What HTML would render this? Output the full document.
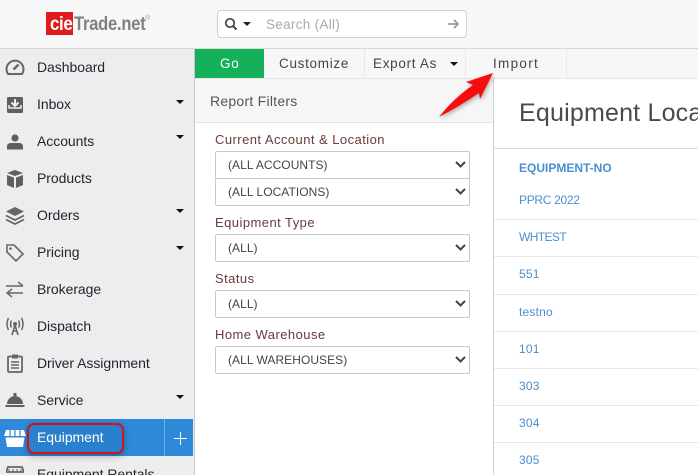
<!DOCTYPE html>
<html><head><meta charset="utf-8"><style>
html,body{margin:0;padding:0;width:698px;height:475px;overflow:hidden;background:#fff;font-family:"Liberation Sans",sans-serif}
.a{position:absolute;white-space:nowrap}
#root{position:relative;width:698px;height:475px;overflow:hidden}
.nav{left:37px;font-size:14px;color:#1f2430;letter-spacing:-.05px;line-height:18px}
.car{position:absolute;left:176px;width:0;height:0;border-left:4px solid transparent;border-right:4px solid transparent;border-top:4px solid #111}
.lab{left:215px;font-size:13px;color:#6b3a3a;letter-spacing:.45px;line-height:16px}
.sel{position:absolute;left:215px;width:253px;height:26px;border:1px solid #c8c8c8;background:#fff;border-radius:2px}
.sel span{position:absolute;left:12px;top:5px;font-size:12px;line-height:16px;color:#444;letter-spacing:.05px}
.sel svg{position:absolute;right:3px;top:9px}
.tb{font-size:13.5px;color:#444;letter-spacing:.7px;line-height:16px;top:56px}
.r{left:519px;font-size:12px;color:#4a8fd0;letter-spacing:.2px;line-height:16px}
.hl{position:absolute;left:494px;width:204px;height:1px;background:#e8e8e8}
svg.i{position:absolute}
</style></head><body><div id="root">
<div class="a" style="left:0;top:0;width:698px;height:48px;background:#f7f7f7;border-bottom:1px solid #d8d8d8"></div>
<div class="a" style="left:46px;top:12px;width:27px;height:23px;background:#e01b1b"></div>
<div class="a" style="left:50px;top:13px;font:bold 17px/22px 'Liberation Sans',sans-serif;color:#fff;letter-spacing:-.4px;transform:scaleY(1.15);transform-origin:0 50%">cie</div>
<div class="a" style="left:74px;top:13px;font:bold 16.5px/22px 'Liberation Sans',sans-serif;color:#808080;letter-spacing:-.2px;transform:scaleY(1.2);transform-origin:0 50%">Trade.net</div>
<div class="a" style="left:145px;top:15px;font:7px/8px 'Liberation Sans',sans-serif;color:#999">®</div>
<div class="a" style="left:217px;top:10px;width:248px;height:26px;border:1px solid #cfcfcf;border-radius:4px;background:#fff"></div>
<svg class="i" style="left:224px;top:17px" width="14" height="14" viewBox="0 0 14 14"><circle cx="6" cy="6" r="4.200" fill="none" stroke="#444" stroke-width="1.700"/><path d="M9 9l3.500 3.500" stroke="#444" stroke-width="2"/></svg>
<div class="a" style="left:243px;top:22px;width:0;height:0;border-left:4px solid transparent;border-right:4px solid transparent;border-top:4px solid #222"></div>
<div class="a" style="left:266px;top:16px;font-size:13.500px;line-height:17px;color:#aaa;letter-spacing:.3px">Search (All)</div>
<svg class="i" style="left:447px;top:18px" width="13" height="12" viewBox="0 0 13 12"><path d="M1 6h10M7 2l4 4-4 4" fill="none" stroke="#909aa4" stroke-width="1.800"/></svg>

<div class="a" style="left:0;top:49px;width:194px;height:426px;background:#ededed;border-right:1px solid #c9c9c9"></div>
<div class="a nav" style="top:58px">Dashboard</div>
<div class="a nav" style="top:95px">Inbox</div><div class="car" style="top:100px"></div>
<div class="a nav" style="top:132px">Accounts</div><div class="car" style="top:135px"></div>
<div class="a nav" style="top:169px">Products</div>
<div class="a nav" style="top:206px">Orders</div><div class="car" style="top:209px"></div>
<div class="a nav" style="top:243px">Pricing</div><div class="car" style="top:246px"></div>
<div class="a nav" style="top:280px">Brokerage</div>
<div class="a nav" style="top:317px">Dispatch</div>
<div class="a nav" style="top:354px">Driver Assignment</div>
<div class="a nav" style="top:391px">Service</div><div class="car" style="top:395px"></div>
<div class="a" style="left:0;top:419px;width:193px;height:37px;background:#2e8ad8"></div>
<div class="a" style="left:164px;top:419px;width:1px;height:37px;background:#6fb0e6"></div>
<div class="a" style="left:27px;top:423px;width:93px;height:27px;border:2px solid #d5101c;border-radius:7px;box-shadow:0 2px 7px rgba(0,0,0,.3);background:#2a80cc"></div>
<div class="a nav" style="top:428px;color:#fff">Equipment</div>
<div class="a" style="left:174px;top:438px;width:13px;height:1px;background:#fff"></div>
<div class="a" style="left:180px;top:432px;width:1px;height:13px;background:#fff"></div>
<div class="a nav" style="top:465px">Equipment Rentals</div>

<svg class="i" style="left:5px;top:58px" width="20" height="18" viewBox="0 0 20 18"><path d="M3 16a8.500 8.500 0 1 1 14 0z" fill="none" stroke="#666" stroke-width="2"/><path d="M8.500 11.500l5-5" stroke="#666" stroke-width="2.400"/></svg>
<svg class="i" style="left:6px;top:96px" width="18" height="18" viewBox="0 0 18 18"><rect x="1" y="1" width="16" height="16" rx="1.500" fill="#5f5f5f"/><path d="M9 3v6M5.500 6.500L9 10l3.500-3.500" stroke="#eee" stroke-width="2" fill="none"/><path d="M3 9v3h12V9" stroke="#eee" stroke-width="1.500" fill="none"/></svg>
<svg class="i" style="left:7px;top:134px" width="16" height="16" viewBox="0 0 16 16"><circle cx="8" cy="4" r="3.600" fill="#5f5f5f"/><path d="M0 15.500v-3q0-3.500 4-3.500h8q4 0 4 3.500v3z" fill="#5f5f5f"/></svg>
<svg class="i" style="left:6px;top:170px" width="18" height="18" viewBox="0 0 18 18"><path d="M9 0l8 3-8 3-8-3zM1 5l7 2.600V18l-7-3zM17 5l-7 2.600V18l7-3z" fill="#5f5f5f"/></svg>
<svg class="i" style="left:5px;top:206px" width="20" height="19" viewBox="0 0 20 19"><path d="M10 1l9 4.500-9 4.500-9-4.500z" fill="#666"/><path d="M1 9.500l9 4.500 9-4.500M1 13.500l9 4.500 9-4.500" stroke="#666" stroke-width="1.800" fill="none"/></svg>
<svg class="i" style="left:5px;top:243px" width="20" height="20" viewBox="0 0 20 20"><path d="M2 2h7l9 9-7 7-9-9z" fill="none" stroke="#666" stroke-width="1.600"/><circle cx="5.500" cy="5.500" r="1.300" fill="#666"/></svg>
<svg class="i" style="left:6px;top:281px" width="18" height="17" viewBox="0 0 18 17"><path d="M0 5h17M12 1l5 4M17 12H1M6 8l-5 4 5 4" fill="none" stroke="#666" stroke-width="1.500"/></svg>
<svg class="i" style="left:5px;top:317px" width="20" height="19" viewBox="0 0 20 19"><circle cx="10" cy="7" r="2" fill="#666"/><path d="M10 8l-3 10M10 8l3 10M7.500 14h5" stroke="#666" stroke-width="1.600"/><path d="M6.500 3.500q-2 3.500 0 7M13.500 3.500q2 3.500 0 7M3.500 1q-3 6 0 12M16.500 1q3 6 0 12" fill="none" stroke="#666" stroke-width="1.500"/></svg>
<svg class="i" style="left:7px;top:354px" width="16" height="19" viewBox="0 0 16 19"><rect x="1" y="2.500" width="14" height="15.500" rx="1" fill="none" stroke="#666" stroke-width="1.800"/><rect x="5" y="0.500" width="6" height="4" fill="#666"/><path d="M4 8h8M4 11h8M4 14h8" stroke="#666" stroke-width="1.500"/></svg>
<svg class="i" style="left:5px;top:392px" width="20" height="16" viewBox="0 0 20 16"><path d="M2 12a8 8 0 0 1 16 0z" fill="#5f5f5f"/><rect x="8.500" y="1" width="3" height="3" fill="#5f5f5f"/><rect x="0.500" y="13" width="19" height="2" fill="#5f5f5f"/></svg>
<svg class="i" style="left:4px;top:429px" width="22" height="19" viewBox="0 0 22 19"><path d="M2 1h18l2 6H0z" fill="#fff"/><path d="M6 1v6M11 1v6M16 1v6" stroke="#2e8ad8" stroke-width="1.200"/><path d="M1.500 8.500h19L19 18H3z" fill="#fff"/></svg>
<svg class="i" style="left:6px;top:466px" width="18" height="9" viewBox="0 0 18 9"><path d="M2 1h14l2 5H0z" fill="none" stroke="#666" stroke-width="1.800"/><path d="M3 3v3M7 3v3M11 3v3M15 3v3" stroke="#666"/></svg>

<div class="a" style="left:195px;top:49px;width:503px;height:29px;background:#f7f7f7;border-bottom:1px solid #e6e6e6"></div>
<div class="a" style="left:195px;top:49px;width:69px;height:29px;background:#14b05a"></div>
<div class="a tb" style="left:220px;color:#fff">Go</div>
<div class="a tb" style="left:279px">Customize</div>
<div class="a" style="left:364px;top:49px;width:1px;height:29px;background:#e8e8e8"></div>
<div class="a tb" style="left:373px">Export As</div>
<div class="a" style="left:450px;top:62px;width:0;height:0;border-left:4px solid transparent;border-right:4px solid transparent;border-top:4px solid #111"></div>
<div class="a" style="left:465px;top:49px;width:1px;height:29px;background:#e8e8e8"></div>
<div class="a tb" style="left:493px;letter-spacing:1.300px">Import</div>
<div class="a" style="left:566px;top:49px;width:1px;height:29px;background:#e8e8e8"></div>

<div class="a" style="left:195px;top:79px;width:298px;height:43px;background:#f6f6f6;border-bottom:1px solid #e2e2e2"></div>
<div class="a" style="left:210px;top:92px;font-size:14px;line-height:18px;color:#555;letter-spacing:.25px">Report Filters</div>
<div class="a" style="left:493px;top:79px;width:1px;height:396px;background:#cfcfcf"></div>

<div class="a lab" style="top:132px">Current Account &amp; Location</div>
<div class="sel" style="top:151px"><span>(ALL ACCOUNTS)</span><svg width="11" height="7" viewBox="0 0 11 7"><path d="M1 1l4.500 4.500L10 1" fill="none" stroke="#444" stroke-width="2"/></svg></div>
<div class="sel" style="top:178px"><span>(ALL LOCATIONS)</span><svg width="11" height="7" viewBox="0 0 11 7"><path d="M1 1l4.500 4.500L10 1" fill="none" stroke="#444" stroke-width="2"/></svg></div>
<div class="a lab" style="top:215px">Equipment Type</div>
<div class="sel" style="top:234px"><span>(ALL)</span><svg width="11" height="7" viewBox="0 0 11 7"><path d="M1 1l4.500 4.500L10 1" fill="none" stroke="#444" stroke-width="2"/></svg></div>
<div class="a lab" style="top:271px">Status</div>
<div class="sel" style="top:290px"><span>(ALL)</span><svg width="11" height="7" viewBox="0 0 11 7"><path d="M1 1l4.500 4.500L10 1" fill="none" stroke="#444" stroke-width="2"/></svg></div>
<div class="a lab" style="top:327px">Home Warehouse</div>
<div class="sel" style="top:346px"><span>(ALL WAREHOUSES)</span><svg width="11" height="7" viewBox="0 0 11 7"><path d="M1 1l4.500 4.500L10 1" fill="none" stroke="#444" stroke-width="2"/></svg></div>

<div class="a" style="left:519px;top:97px;font-size:25px;line-height:32px;color:#4a4a4a;letter-spacing:.2px">Equipment Loca</div>
<div class="a" style="left:494px;top:148px;width:204px;height:1px;background:#dcdcdc"></div>
<div class="a r" style="top:160px;font-weight:bold;letter-spacing:0">EQUIPMENT-NO</div>
<div class="a r" style="top:192px;letter-spacing:-.3px">PPRC 2022</div><div class="hl" style="top:219px"></div>
<div class="a r" style="top:229px;letter-spacing:-.6px">WHTEST</div><div class="hl" style="top:256px"></div>
<div class="a r" style="top:266px">551</div><div class="hl" style="top:294px"></div>
<div class="a r" style="top:304px">testno</div><div class="hl" style="top:331px"></div>
<div class="a r" style="top:341px">101</div><div class="hl" style="top:368px"></div>
<div class="a r" style="top:378px">303</div><div class="hl" style="top:405px"></div>
<div class="a r" style="top:415px">304</div><div class="hl" style="top:442px"></div>
<div class="a r" style="top:452px">305</div>

<svg class="i" style="left:436px;top:70px;filter:drop-shadow(1px 2px 2px rgba(0,0,0,.3))" width="70" height="52" viewBox="0 0 70 52"><path d="M57 3L30 12 37 15Q18 28 3 47 24 36 43 23L44 29z" fill="#f60d0d"/></svg>
</div></body></html>
